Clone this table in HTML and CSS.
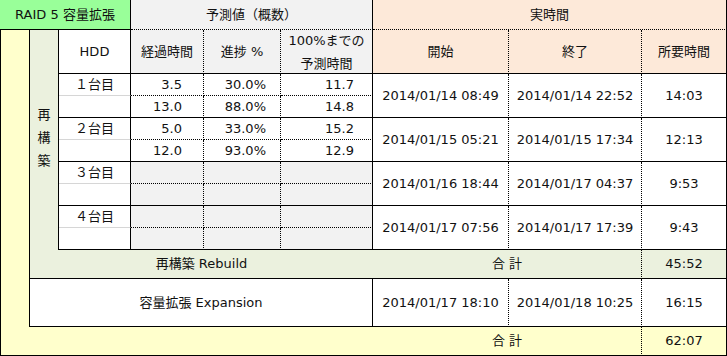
FILE: index.html
```html
<!DOCTYPE html>
<html lang="ja">
<head>
<meta charset="utf-8">
<title>RAID 5 容量拡張</title>
<link rel="stylesheet" href="styles.css">
</head>
<body>
<table class="sheet">
  <colgroup>
    <col class="c-a"><col class="c-b"><col class="c-c"><col class="c-d"><col class="c-e"><col class="c-f"><col class="c-g"><col class="c-h"><col class="c-i">
  </colgroup>
  <tr class="r-h1">
    <td colspan="3" class="green rs bs">RAID 5 容量拡張</td>
    <td colspan="3" class="gray rs bd">予測値（概数）</td>
    <td colspan="3" class="peach rs bd">実時間</td>
  </tr>
  <tr class="r-h2">
    <td rowspan="11" class="yellow ls rs"></td>
    <td rowspan="9" class="sage rs vert">再<br>構<br>築</td>
    <td class="rs bs">HDD</td>
    <td class="gray rd bs">経過時間</td>
    <td class="gray rd bs">進捗 %</td>
    <td class="gray rs bs"><div class="two">100%までの<br>予測時間</div></td>
    <td class="peach rd bs">開始</td>
    <td class="peach rd bs">終了</td>
    <td class="peach rs bs">所要時間</td>
  </tr>

  <tr class="r-sub">
    <td class="rs bg">１台目</td>
    <td class="rd bd num pd">3.5</td>
    <td class="rd bd num pe">30.0%</td>
    <td class="rs bd num pf">11.7</td>
    <td rowspan="2" class="rd bs">2014/01/14 08:49</td>
    <td rowspan="2" class="rd bs">2014/01/14 22:52</td>
    <td rowspan="2" class="rs bs">14:03</td>
  </tr>
  <tr class="r-sub">
    <td class="rs bs"></td>
    <td class="rd bs num pd">13.0</td>
    <td class="rd bs num pe">88.0%</td>
    <td class="rs bs num pf">14.8</td>
  </tr>

  <tr class="r-sub">
    <td class="rs bg">２台目</td>
    <td class="rd bd num pd">5.0</td>
    <td class="rd bd num pe">33.0%</td>
    <td class="rs bd num pf">15.2</td>
    <td rowspan="2" class="rd bs">2014/01/15 05:21</td>
    <td rowspan="2" class="rd bs">2014/01/15 17:34</td>
    <td rowspan="2" class="rs bs">12:13</td>
  </tr>
  <tr class="r-sub">
    <td class="rs bs"></td>
    <td class="rd bs num pd">12.0</td>
    <td class="rd bs num pe">93.0%</td>
    <td class="rs bs num pf">12.9</td>
  </tr>

  <tr class="r-sub">
    <td class="rs bg">３台目</td>
    <td class="gray rd bd"></td>
    <td class="gray rd bd"></td>
    <td class="gray rs bd"></td>
    <td rowspan="2" class="rd bs">2014/01/16 18:44</td>
    <td rowspan="2" class="rd bs">2014/01/17 04:37</td>
    <td rowspan="2" class="rs bs">9:53</td>
  </tr>
  <tr class="r-sub">
    <td class="rs bs"></td>
    <td class="gray rd bs"></td>
    <td class="gray rd bs"></td>
    <td class="gray rs bs"></td>
  </tr>

  <tr class="r-sub">
    <td class="rs bg">４台目</td>
    <td class="gray rd bd"></td>
    <td class="gray rd bd"></td>
    <td class="gray rs bd"></td>
    <td rowspan="2" class="rd bs">2014/01/17 07:56</td>
    <td rowspan="2" class="rd bs">2014/01/17 17:39</td>
    <td rowspan="2" class="rs bs">9:43</td>
  </tr>
  <tr class="r-sub">
    <td class="rs bs"></td>
    <td class="gray rd bs"></td>
    <td class="gray rd bs"></td>
    <td class="gray rs bs"></td>
  </tr>

  <tr class="r-rb">
    <td colspan="5" class="sage bs">再構築 Rebuild</td>
    <td colspan="2" class="sage rd bs">合 計</td>
    <td class="sage rs bs">45:52</td>
  </tr>
  <tr class="r-ex">
    <td colspan="5" class="rs bs">容量拡張 Expansion</td>
    <td class="rd bs">2014/01/17 18:10</td>
    <td class="rd bs">2014/01/18 10:25</td>
    <td class="rs bs">16:15</td>
  </tr>
  <tr class="r-tot">
    <td colspan="6" class="yellow ls bs"></td>
    <td colspan="2" class="yellow rd bs">合 計</td>
    <td class="yellow rs bs">62:07</td>
  </tr>
</table>
</body>
</html>
```

FILE: styles.css
```css
html, body {
  margin: 0;
  padding: 0;
  background: #ffffff;
}

.sheet {
  width: 727px;
  table-layout: fixed;
  border-collapse: separate;
  border-spacing: 0;
  font-family: "DejaVu Sans", "Noto Sans CJK JP", sans-serif;
  font-size: 13px;
  color: #111;
}

.c-a { width: 30px; }
.c-b { width: 29px; }
.c-c { width: 72px; }
.c-d { width: 73px; }
.c-e { width: 77px; }
.c-f { width: 92px; }
.c-g { width: 136px; }
.c-h { width: 133px; }
.c-i { width: 85px; }

.sheet td {
  box-sizing: border-box;
  padding: 0;
  border: 0;
  text-align: center;
  vertical-align: middle;
  line-height: 16px;
  white-space: nowrap;
  overflow: hidden;
}

.r-h1 { height: 30px; }
.r-h2 { height: 44px; }
.r-sub { height: 22px; }
.r-rb { height: 29px; }
.r-ex { height: 48px; }
.r-tot { height: 29px; }

/* borders */
.sheet .rs { border-right: 1px solid #000; }
.sheet .rd { border-right: 1px dotted #000; }
.sheet .ls { border-left: 1px solid #000; }
.sheet .bs { border-bottom: 1px solid #000; }
.sheet .bd { border-bottom: 1px dotted #000; }
.sheet .bg { border-bottom: 1px solid #d6d6d6; }

/* fills */
.green { background: #99ff99; }
.gray { background: #f2f2f2; }
.peach { background: #fde9d9; }
.yellow { background: #ffffcc; }
.sage { background: #ebf1de; }

.two {
  line-height: 23px;
  margin: -3px 0 -4px;
}

.sheet .vert {
  line-height: 23px;
  padding-bottom: 6px;
}

.sheet .num { text-align: right; }
.sheet .pd { padding-right: 21px; }
.sheet .pe { padding-right: 14px; }
.sheet .pf { padding-right: 18px; }
```
